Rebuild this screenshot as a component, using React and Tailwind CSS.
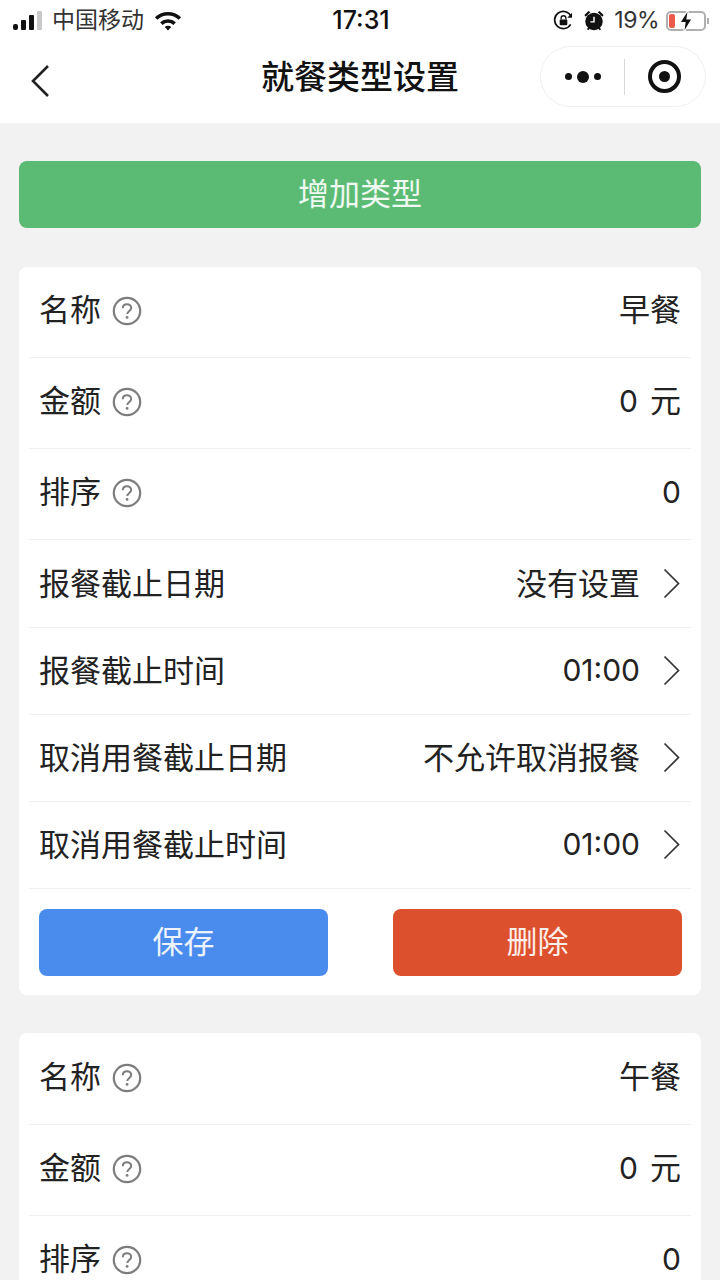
import React from 'react';

const FONT = "font-['Inter','Noto_Sans_CJK_SC',sans-serif]";

const HelpIcon = () => (
  <svg width="30" height="30" viewBox="0 0 30 30" className="ml-[11px] mt-[3px] shrink-0">
    <circle cx="15" cy="15" r="13.2" fill="none" stroke="#7d7d7d" strokeWidth="2.2" />
    <path d="M10.8 12.2c0-2.5 1.9-4 4.2-4s4.2 1.5 4.2 3.7c0 3-3.9 3.2-3.9 6.2" fill="none" stroke="#7d7d7d" strokeWidth="2" />
    <circle cx="15.1" cy="21.4" r="1.4" fill="#7d7d7d" />
  </svg>
);

const Chevron = () => (
  <svg width="17" height="31" viewBox="0 0 17 31" className="ml-[23px] mr-[11px] shrink-0">
    <path d="M1.5 1.5 15.5 15.5 1.5 29.5" fill="none" stroke="#333" strokeWidth="1.7" />
  </svg>
);

const InfoRow = ({ label, children }) => (
  <div className="h-[91px] flex items-center justify-between px-[10px] pb-[6px] border-b border-[#f0f0f0]">
    <div className="flex items-center">
      <span className="text-[31px] leading-none text-[#222]">{label}</span>
      <HelpIcon />
    </div>
    <span className="text-[31px] leading-none text-[#222]">{children}</span>
  </div>
);

const PickerRow = ({ label, value, digits }) => (
  <div className="h-[87px] flex items-center justify-between pl-[10px] pb-[2px] border-b border-[#f0f0f0]">
    <span className="text-[31px] leading-none text-[#222]">{label}</span>
    <div className="flex items-center">
      <span className={digits ? 'text-[30px] leading-none text-[#222]' : 'text-[31px] leading-none text-[#222]'}>{value}</span>
      <Chevron />
    </div>
  </div>
);

const Battery = () => (
  <div className="flex items-center ml-[7px]">
    <div className="relative w-[40px] h-[20px] rounded-[5px] border-2 border-[#b0b0b0]">
      <div className="w-[6px] h-[14px] mt-px ml-px rounded-[2px] bg-[#ee5a4a]" />
      <svg width="16" height="26" viewBox="0 0 16 26" className="absolute left-[10px] top-[-5px]">
        <path d="M10.5 1 2 14.5h5L5.5 25 14 11H9z" fill="#111" stroke="#fff" strokeWidth="1.2" />
      </svg>
    </div>
    <div className="w-[2px] h-[6px] ml-px bg-[#b0b0b0]" />
  </div>
);

const StatusBar = () => (
  <div className="h-[40px] flex items-center justify-between pl-[13px] pr-[11px] pt-px">
    <div className="flex items-center w-[240px]">
      <div className="flex items-end gap-[3px] h-[19px]">
        <div className="w-[5px] h-[6px] rounded-[2px] bg-[#111]" />
        <div className="w-[5px] h-[10px] rounded-[1px] bg-[#111]" />
        <div className="w-[5px] h-[15px] rounded-[1px] bg-[#111]" />
        <div className="w-[5px] h-[19px] rounded-[1px] bg-[#c9c9c9]" />
      </div>
      <span className="ml-[10px] text-[23px] leading-none text-[#333]">中国移动</span>
      <svg width="28" height="21" viewBox="0 0 30 22" className="ml-[10px]">
        <path d="M1 7.5a20 20 0 0 1 28 0l-2.6 2.8a16 16 0 0 0-22.8 0z" fill="#111" />
        <path d="M6.5 13a12.5 12.5 0 0 1 17 0l-2.7 2.8a8.5 8.5 0 0 0-11.6 0z" fill="#111" />
        <path d="M11.5 18a5 5 0 0 1 7 0L15 21.6z" fill="#111" />
      </svg>
    </div>
    <span className="text-[25px] leading-none font-medium text-[#111]">17:31</span>
    <div className="flex items-center justify-end w-[240px]">
      <svg width="21" height="21" viewBox="0 0 22 22">
        <path d="M18.5 15A9 9 0 1 1 19 7" fill="none" stroke="#111" strokeWidth="1.8" />
        <path d="m20 3 0 5-5 0z" fill="#111" />
        <rect x="7" y="10" width="8" height="6" rx="1" fill="#111" />
        <path d="M8.5 10V8.5a2.5 2.5 0 0 1 5 0V10" fill="none" stroke="#111" strokeWidth="1.4" />
      </svg>
      <svg width="22" height="23" viewBox="0 0 24 24" className="ml-[9px]">
        <circle cx="12" cy="13" r="9.5" fill="#111" />
        <path d="M12 8v5.5H8" fill="none" stroke="#fff" strokeWidth="1.6" />
        <path d="M1.5 6 6 1.5 8 3 3 8zM22.5 6 18 1.5 16 3l5 5z" fill="#111" />
        <path d="m5 22 2-2M19 22l-2-2" stroke="#111" strokeWidth="2" />
      </svg>
      <span className="ml-[9px] text-[23px] leading-none tracking-[-0.5px] text-[#333]">19%</span>
      <Battery />
    </div>
  </div>
);

const NavBar = () => (
  <div className="h-[83px] relative flex items-center justify-center">
    <svg width="20" height="34" viewBox="0 0 20 34" className="absolute left-[30px] top-[24px]">
      <path d="M18 2 3 17l15 15" fill="none" stroke="#222" strokeWidth="2.6" />
    </svg>
    <span className="text-[33px] leading-none font-medium text-[#111] mb-[8px]">就餐类型设置</span>
    <div className="absolute right-[14px] top-[6px] w-[166px] h-[61px] rounded-full border border-[#efefef] bg-white flex items-center">
      <div className="flex-1 flex items-center justify-center gap-[5px] pl-[2px]">
        <div className="w-[7px] h-[7px] rounded-full bg-[#111]" />
        <div className="w-[12px] h-[12px] rounded-full bg-[#111]" />
        <div className="w-[7px] h-[7px] rounded-full bg-[#111]" />
      </div>
      <div className="w-px h-[36px] bg-[#d8d8d8]" />
      <div className="flex-1 flex items-center justify-center">
        <div className="w-[33px] h-[33px] rounded-full border-[4px] border-[#111] flex items-center justify-center">
          <div className="w-[11px] h-[11px] rounded-full bg-[#111]" />
        </div>
      </div>
    </div>
  </div>
);

const MealCard = ({ name, full }) => (
  <div className={full ? 'mx-[19px] bg-white rounded-[8px] px-[10px]' : 'mx-[19px] bg-white rounded-[8px] px-[10px] pt-px'}>
    <InfoRow label="名称">{name}</InfoRow>
    <InfoRow label="金额">
      <span className="text-[30px]">0</span>
      <span className="ml-[12px]">元</span>
    </InfoRow>
    <InfoRow label="排序">
      <span className="text-[30px]">0</span>
    </InfoRow>
    {full && (
      <div className="pt-px">
        <PickerRow label="报餐截止日期" value="没有设置" />
        <PickerRow label="报餐截止时间" value="01:00" digits />
        <PickerRow label="取消用餐截止日期" value="不允许取消报餐" />
        <PickerRow label="取消用餐截止时间" value="01:00" digits />
        <div className="flex justify-between px-[10px] pr-[9px] pt-[20px] pb-[19px]">
          <button className="w-[289px] h-[67px] rounded-[8px] bg-[#4a8bee] text-white/90 text-[31px]">保存</button>
          <button className="w-[289px] h-[67px] rounded-[8px] bg-[#dd502d] text-white/90 text-[31px]">删除</button>
        </div>
      </div>
    )}
  </div>
);

export default function App() {
  return (
    <div className={`h-[1280px] overflow-hidden bg-[#f2f2f2] ${FONT}`}>
      <div className="bg-white">
        <StatusBar />
        <NavBar />
      </div>
      <div className="px-[19px] pt-[38px] pb-[39px]">
        <button className="w-full h-[67px] rounded-[8px] bg-[#5bbb74] text-white/90 text-[31px]">增加类型</button>
      </div>
      <div className="flex flex-col gap-[38px]">
        <MealCard name="早餐" full />
        <MealCard name="午餐" />
      </div>
    </div>
  );
}
